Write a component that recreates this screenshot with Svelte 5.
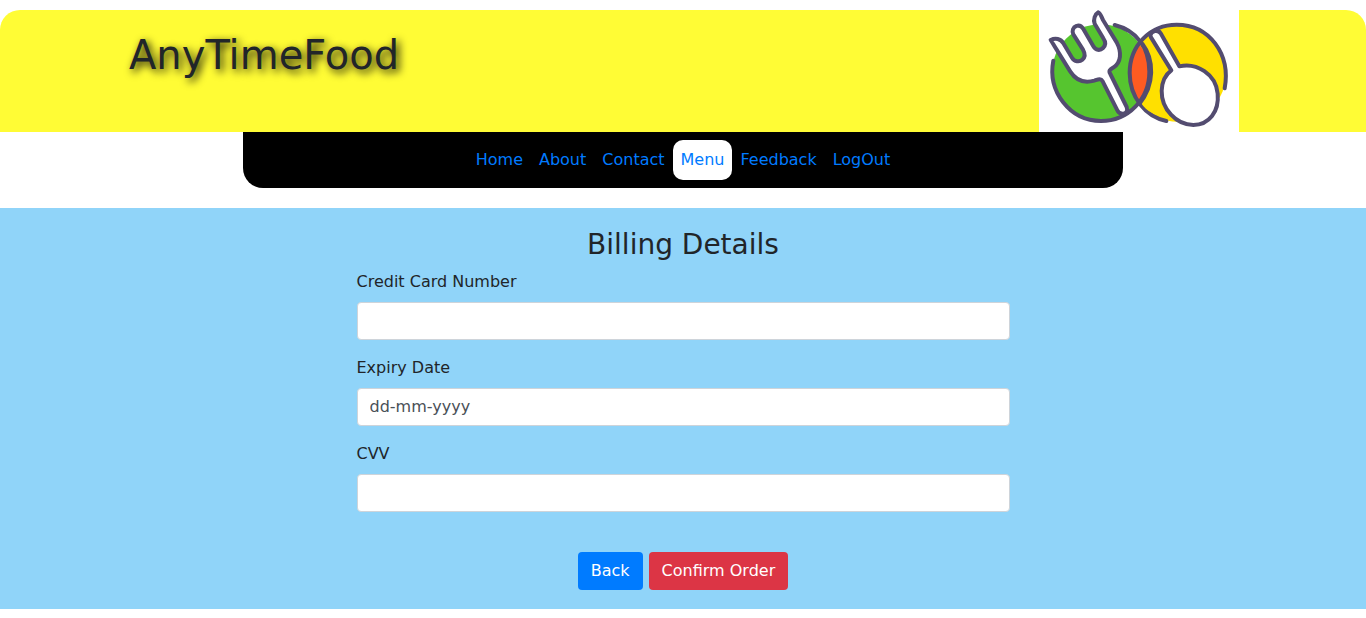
<script>
  const links = [
    { label: 'Home' },
    { label: 'About' },
    { label: 'Contact' },
    { label: 'Menu', active: true },
    { label: 'Feedback' },
    { label: 'LogOut' }
  ];
  let card = $state('');
  let expiry = $state('');
  let cvv = $state('');
</script>

<header>
  <h1>AnyTimeFood</h1>
  <svg class="logo" viewBox="27 30 600 366" role="img" aria-label="Fork and spoon">
    <rect x="27" y="30" width="600" height="366" fill="#fff" />
    <ellipse cx="212" cy="218" rx="146" ry="145" fill="#56c52f" />
    <ellipse cx="442" cy="218" rx="147" ry="147" fill="#ffe000" />
    <path d="M328 134C371 182 371 260 327 307C286 258 286 181 328 134Z" fill="#ff5b22" />
    <g fill="none" stroke="#534c70" stroke-width="12" stroke-linecap="round" stroke-linejoin="round">
      <path d="M70 182C52 274 119 363 213 363C295 363 358 297 358 215C358 141 318 91 254 75" />
      <path d="M409 363C347 350 299 292 299 219C299 137 360 74 440 74C538 74 603 162 584 265" />
      <path fill="#fff" d="M62 120C76 113 92 116 100 130L126 173C133 185 148 187 157 179C166 171 166 161 159 149L130 103C125 94 129 81 139 78C147 75 155 79 160 87L190 139C197 151 210 153 219 144C227 136 227 125 220 115L194 71C189 58 195 43 205 37C211 39 214 50 219 60L260 127C276 157 273 187 251 202C239 209 235 212 241 222L290 321C294 332 289 341 278 341C269 341 264 336 261 329L218 244C212 234 205 238 193 242C161 251 137 240 121 215L78 146C72 137 68 129 62 120Z" />
      <path fill="#fff" d="M361 106C364 93 383 87 392 100L448 199C500 187 558 222 563 281C568 335 537 375 490 375C439 375 394 327 395 272C396 246 406 224 424 211L363 112Z" />
    </g>
    <path d="M343 124C347 118 356 120 361 129L411 211C391 225 381 248 384 279C388 306 400 334 420 354C380 350 347 333 333 308C375 253 374 181 334 134Z" fill="#ffe000" />
    <path d="M336 130C374 180 374 255 328 312" fill="none" stroke="#534c70" stroke-width="12" />
  </svg>
</header>

<nav>
  {#each links as link}
    <a href="#top" class:active={link.active}>{link.label}</a>
  {/each}
</nav>

<main>
  <form onsubmit={(event) => event.preventDefault()}>
    <h2>Billing Details</h2>
    <div class="field">
      <label for="card">Credit Card Number</label>
      <input id="card" type="text" bind:value={card} />
    </div>
    <div class="field">
      <label for="expiry">Expiry Date</label>
      <input id="expiry" class="date" type="text" placeholder="dd-mm-yyyy" bind:value={expiry} />
    </div>
    <div class="field">
      <label for="cvv">CVV</label>
      <input id="cvv" type="text" bind:value={cvv} />
    </div>
    <div class="actions">
      <button class="back" type="button">Back</button>
      <button class="confirm" type="submit">Confirm Order</button>
    </div>
  </form>
</main>

<style>
  :global(body) {
    margin: 0;
    background: #fff;
    color: #212529;
    font: 16px/24px Verdana, "DejaVu Sans", sans-serif;
    overflow: hidden;
  }
  :global(*) { box-sizing: border-box; }
  header {
    display: flex;
    justify-content: space-between;
    height: 122px;
    margin-top: 10px;
    padding: 0 127px 0 129px;
    background: #fffc35;
    border-radius: 20px 20px 0 0;
  }
  h1 {
    margin: 21px 0 0;
    font-size: 40px;
    line-height: 48px;
    font-weight: 400;
    text-shadow: 3px 3px 8px #000;
  }
  .logo { display: block; width: 200px; height: 122px; }
  nav {
    display: flex;
    justify-content: center;
    width: 880px;
    height: 56px;
    margin: 0 auto 20px;
    padding: 8px;
    background: #000;
    border-radius: 0 0 20px 20px;
  }
  nav a {
    padding: 8px;
    border-radius: 10px;
    color: #007bff;
    text-decoration: none;
  }
  nav .active { background: #fff; }
  main {
    height: 401px;
    padding-top: 20px;
    background: #90d4f9;
  }
  form { width: 653px; margin: 0 auto; }
  h2 {
    margin: 0 0 8px;
    font-size: 28px;
    line-height: 33.6px;
    font-weight: 400;
    text-align: center;
  }
  .field { margin-bottom: 16px; }
  label { display: block; height: 24px; margin-bottom: 8px; }
  input {
    display: block;
    width: 100%;
    height: 38px;
    padding: 6px 12px;
    border: 1px solid #ced4da;
    border-radius: 4px;
    background: #fff;
    color: #495057;
    font: inherit;
  }
  input::placeholder { color: #495057; opacity: 1; }
  .actions { display: flex; justify-content: center; gap: 6px; padding-top: 24px; }
  button {
    height: 38px;
    padding: 6px 12px;
    border: 1px solid transparent;
    border-radius: 4px;
    color: #fff;
    font: inherit;
  }
  .back { background: #007bff; }
  .confirm { background: #dc3545; }
</style>
